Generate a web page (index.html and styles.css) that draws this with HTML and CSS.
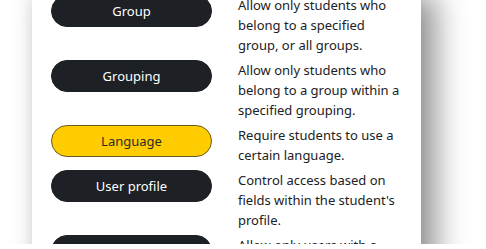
FILE: index.html
```html
<!DOCTYPE html>
<html lang="en">
<head>
    <meta charset="UTF-8">
    <meta name="viewport" content="width=device-width, initial-scale=1.0">
    <title>Restriction types</title>
    <link rel="stylesheet" href="styles.css">
</head>
<body>
    <div class="page">
        <div class="dialog">
            <div class="option">
                <button class="option-btn">Group</button>
                <p class="option-desc">Allow only students who belong to a specified group, or all groups.</p>
            </div>
            <div class="option">
                <button class="option-btn">Grouping</button>
                <p class="option-desc">Allow only students who belong to a group within a specified grouping.</p>
            </div>
            <div class="option">
                <button class="option-btn selected">Language</button>
                <p class="option-desc">Require students to use a certain language.</p>
            </div>
            <div class="option">
                <button class="option-btn">User profile</button>
                <p class="option-desc">Control access based on fields within the student's profile.</p>
            </div>
            <div class="option">
                <button class="option-btn">Role</button>
                <p class="option-desc">Allow only users with a specified role.</p>
            </div>
        </div>
    </div>
</body>
</html>
```

FILE: styles.css
```css
body {
    margin: 0;
    padding: 0;
    background-color: #fff;
    font-family: 'Noto Sans', 'Open Sans', sans-serif;
    color: #1d2125;
    overflow: hidden;
}

.page {
    height: 249px;
    padding-left: 32px;
}

.dialog {
    width: 370px;
    margin-top: -5px;
    padding: 0 0 40px 19px;
    background-color: #fff;
    box-shadow: 14px 0 30px rgba(0, 0, 0, 0.45), -4px 0 12px rgba(0, 0, 0, 0.04);
}

.option {
    display: flex;
    align-items: flex-start;
    margin-bottom: 5px;
}

.option-btn {
    flex: 0 0 161px;
    height: 32px;
    margin: 0 26px 0 0;
    padding: 0;
    border: 1px solid #1d2125;
    border-radius: 16px;
    background-color: #1d2125;
    color: #fff;
    font-family: inherit;
    font-size: 13px;
    cursor: pointer;
}

.option-btn.selected {
    background-color: #fc0;
    border-color: #6b5c1e;
    color: #2b2b2b;
}

.option-desc {
    margin: 0;
    width: 165px;
    font-size: 13px;
    line-height: 20px;
}
```
